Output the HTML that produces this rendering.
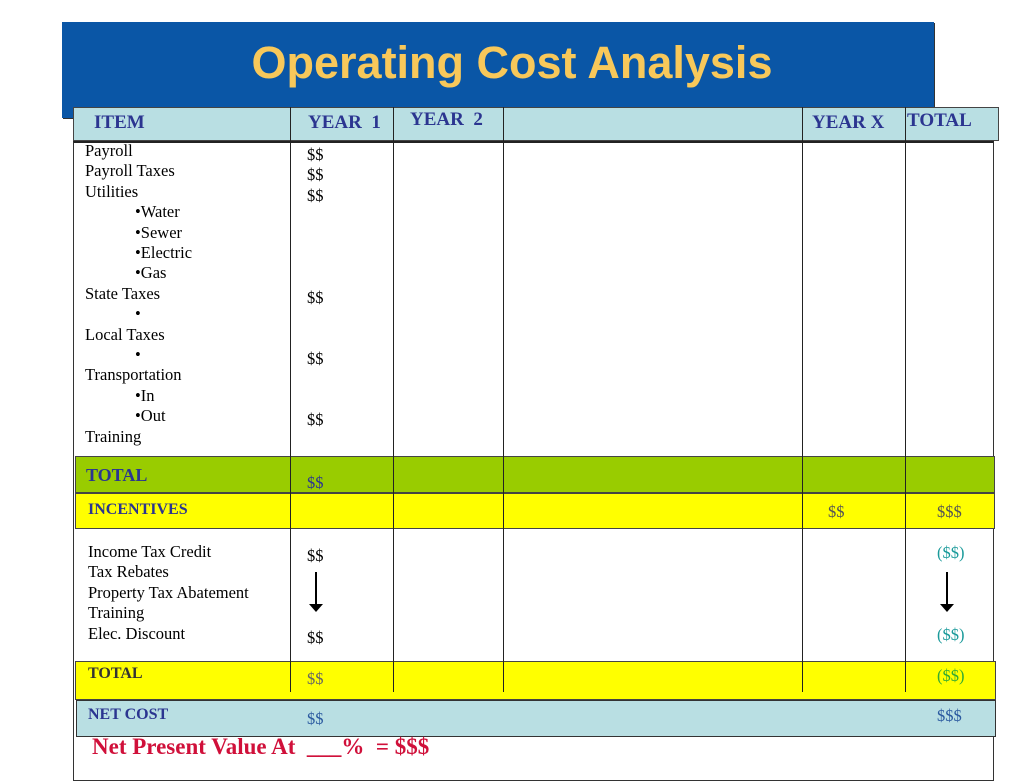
<!DOCTYPE html>
<html><head><meta charset="utf-8"><style>
*{margin:0;padding:0;box-sizing:border-box}
body{width:1024px;height:768px;background:#fff;position:relative;overflow:hidden;font-family:"Liberation Serif",serif}
.a{position:absolute}
.t{position:absolute;font-size:16.5px;line-height:20.4px;color:#000;white-space:nowrap}
.h{position:absolute;font-weight:bold;color:#2b3590;font-size:19px;white-space:nowrap}
.b{position:absolute;font-weight:bold;color:#2b3590;font-size:16px;white-space:nowrap}
.v{position:absolute;width:1px;background:#222}
</style></head><body>
<div class="a" style="left:62px;top:22px;width:872px;height:96px;background:#0a56a6;box-shadow:1px 1px 0 #333"></div>
<div class="a" style="left:62px;top:37px;width:900px;text-align:center;font-family:'Liberation Sans',sans-serif;font-weight:bold;font-size:45px;color:#f8c85a">Operating Cost Analysis</div>
<div class="a" style="left:73px;top:107px;width:926px;height:34px;background:#b9dfe3;border:1px solid #444"></div>
<div class="h" style="left:94px;top:112px">ITEM</div>
<div class="h" style="left:308px;top:112px">YEAR &nbsp;1</div>
<div class="h" style="left:410px;top:109px">YEAR &nbsp;2</div>
<div class="h" style="left:812px;top:112px">YEAR X</div>
<div class="h" style="left:907px;top:110px">TOTAL</div>
<div class="a" style="left:73px;top:141px;width:921px;height:640px;border:1px solid #333;border-top:2px solid #222"></div>
<div class="a" style="left:75px;top:456px;width:920px;height:37px;background:#99cc00;border:1px solid #444"></div>
<div class="a" style="left:75px;top:493px;width:920px;height:36px;background:#ffff00;border:1px solid #444"></div>
<div class="a" style="left:75px;top:661px;width:921px;height:39px;background:#ffff00;border:1px solid #444"></div>
<div class="a" style="left:76px;top:700px;width:920px;height:37px;background:#b9dfe3;border:1px solid #333"></div>
<div class="v" style="left:290px;top:107px;height:585px"></div>
<div class="v" style="left:393px;top:107px;height:585px"></div>
<div class="v" style="left:503px;top:107px;height:585px"></div>
<div class="v" style="left:802px;top:107px;height:585px"></div>
<div class="v" style="left:905px;top:107px;height:585px"></div>
<div class="t" style="left:85px;top:141px">Payroll<br>Payroll Taxes<br>Utilities<br><span style="padding-left:50px">•Water</span><br><span style="padding-left:50px">•Sewer</span><br><span style="padding-left:50px">•Electric</span><br><span style="padding-left:50px">•Gas</span><br>State Taxes<br><span style="padding-left:50px">•</span><br>Local Taxes<br><span style="padding-left:50px">•</span><br>Transportation<br><span style="padding-left:50px">•In</span><br><span style="padding-left:50px">•Out</span><br>Training</div>
<div class="t" style="left:307px;top:145px">$$<br>$$<br>$$</div>
<div class="t" style="left:307px;top:288px">$$</div>
<div class="t" style="left:307px;top:349px">$$</div>
<div class="t" style="left:307px;top:410px">$$</div>
<div class="h" style="left:86px;top:465px;font-size:18px">TOTAL</div>
<div class="t" style="left:307px;top:473px;color:#2b3590">$$</div>
<div class="b" style="left:88px;top:501px">INCENTIVES</div>
<div class="t" style="left:828px;top:502px;color:#555">$$</div>
<div class="t" style="left:937px;top:502px;color:#555">$$$</div>
<div class="t" style="left:88px;top:542px">Income Tax Credit<br>Tax Rebates<br>Property Tax Abatement<br>Training<br>Elec. Discount</div>
<div class="t" style="left:307px;top:546px">$$</div>
<div class="t" style="left:307px;top:628px">$$</div>
<div class="a" style="left:315px;top:572px;width:1.5px;height:32px;background:#000"></div>
<div class="a" style="left:309px;top:604px;width:0;height:0;border-left:7px solid transparent;border-right:7px solid transparent;border-top:8px solid #000"></div>
<div class="t" style="left:937px;top:543px;color:#1a9a9a">($$)</div>
<div class="t" style="left:937px;top:625px;color:#1a9a9a">($$)</div>
<div class="a" style="left:946px;top:572px;width:1.5px;height:32px;background:#000"></div>
<div class="a" style="left:940px;top:604px;width:0;height:0;border-left:7px solid transparent;border-right:7px solid transparent;border-top:8px solid #000"></div>
<div class="b" style="left:88px;top:665px;color:#333">TOTAL</div>
<div class="t" style="left:307px;top:669px;color:#666">$$</div>
<div class="t" style="left:937px;top:666px;color:#33aa33">($$)</div>
<div class="b" style="left:88px;top:706px">NET COST</div>
<div class="t" style="left:307px;top:709px;color:#2b5aa0">$$</div>
<div class="t" style="left:937px;top:706px;color:#2b5aa0">$$$</div>
<div class="a" style="left:92px;top:734px;font-weight:bold;font-size:23px;color:#d0103a;white-space:nowrap">Net Present Value At &nbsp;___% &nbsp;= $$$</div>
</body></html>
